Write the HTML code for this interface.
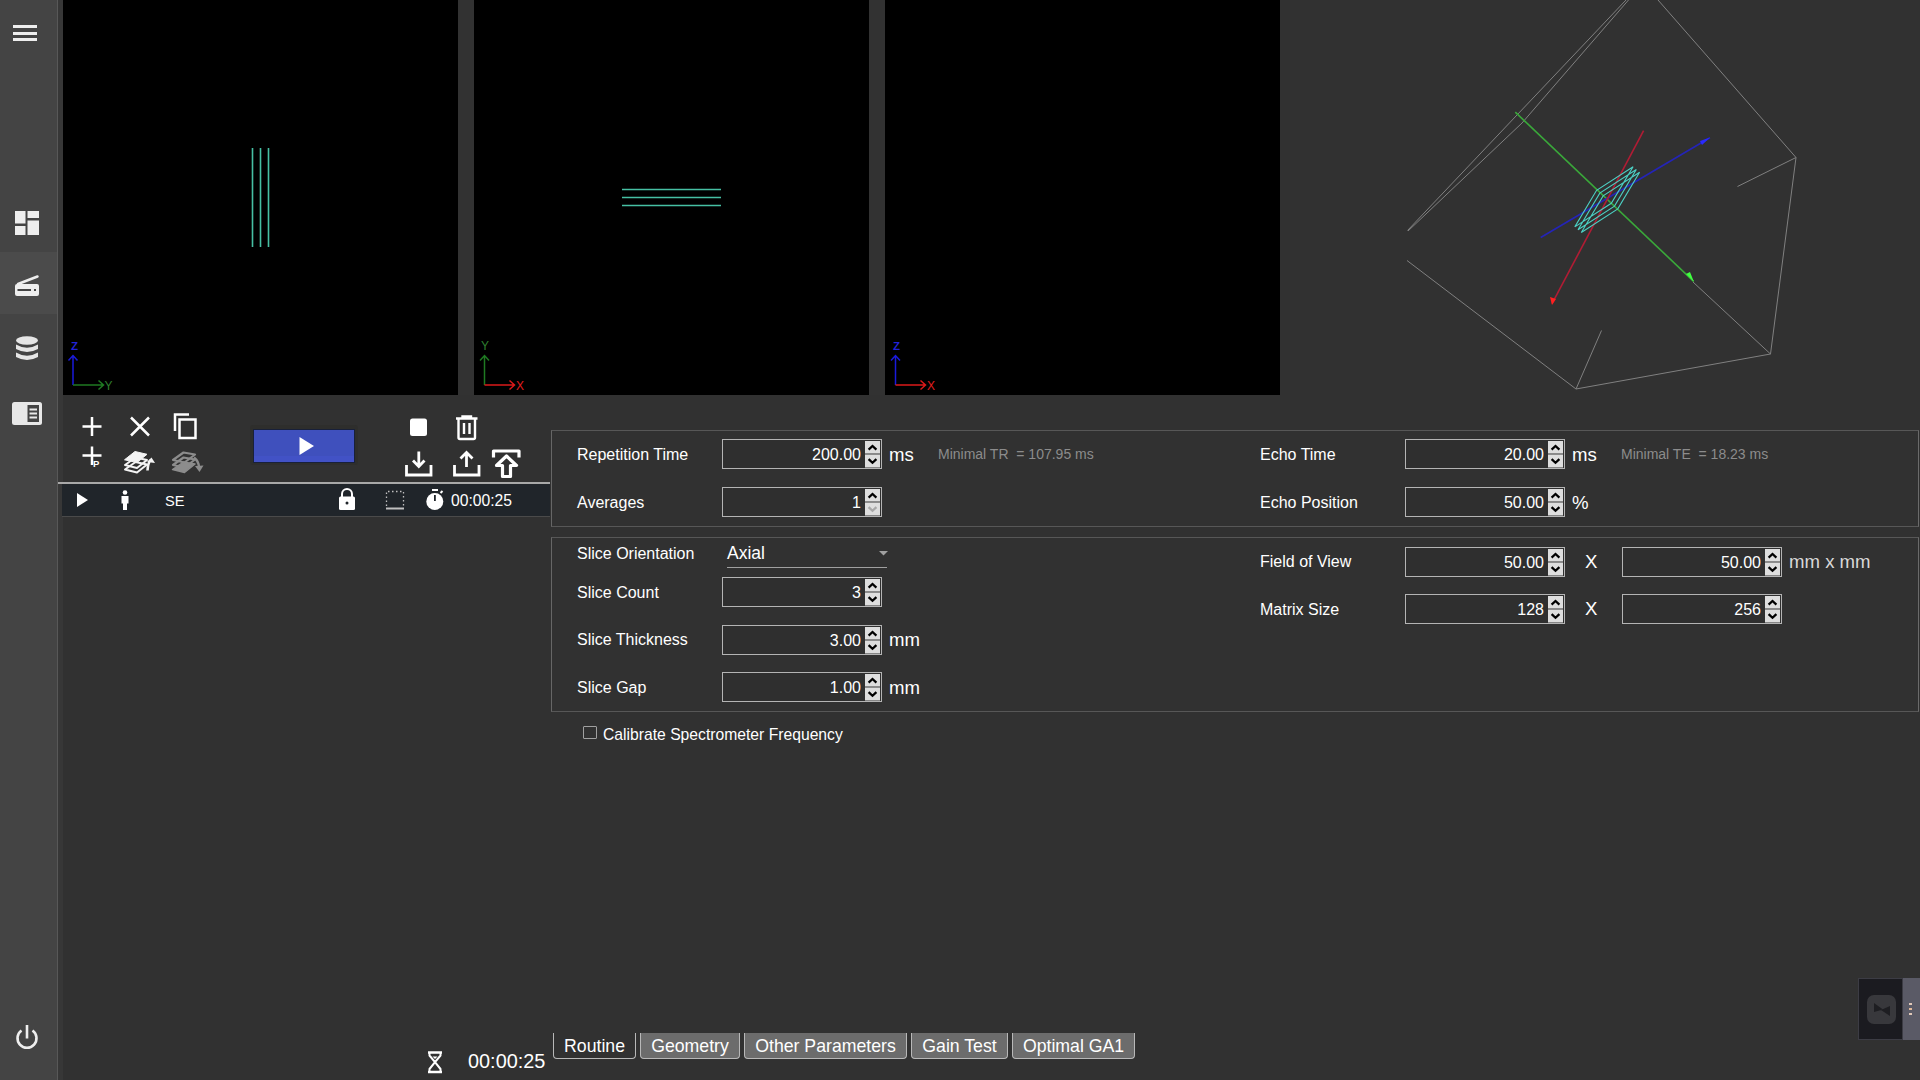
<!DOCTYPE html>
<html><head><meta charset="utf-8">
<style>
*{box-sizing:border-box}
body{margin:0;width:1920px;height:1080px;background:#313131;position:relative;overflow:hidden;font-family:"Liberation Sans",sans-serif;color:#fff}
.a{position:absolute}
.pv{position:absolute;top:0;height:395px;background:#000}
.lbl{position:absolute;font-size:16px;color:#fff;white-space:pre;line-height:18px}
.spin{position:absolute;width:160px;height:30px;border:1px solid #b4b4b4;background:#2f2f2f}
.spin .v{position:absolute;right:20px;top:6px;font-size:16px;line-height:18px;color:#fff}
.spin .bt{position:absolute;right:1px;top:1px;width:16px;height:26px;background:#d9d9d9}
.unit{position:absolute;font-size:18.6px;color:#fff;line-height:20px;white-space:pre}
.hint{position:absolute;font-size:14px;color:#8c8c8c;line-height:16px;white-space:pre}
.grp{position:absolute;border:1px solid #575757;border-left-color:#666;border-right-color:#6a6a6a}
.tab{position:absolute;top:1033px;height:26px;border:1px solid #b8b8b8;border-top:none;border-radius:0 0 4px 4px;font-size:17.7px;line-height:26px;text-align:center;color:#fff;white-space:pre}
</style></head><body>
<!-- sidebar -->
<div class="a" style="left:0;top:0;width:57px;height:1080px;background:#444"></div>
<div class="a" style="left:0;top:252px;width:57px;height:62px;background:#4b4b4b"></div>
<div class="a" style="left:57px;top:0;width:1px;height:1080px;background:#585858"></div>
<div class="a" style="left:58px;top:0;width:5px;height:1080px;background:#373737"></div>

<!-- preview panels -->
<div class="a" style="left:458px;top:0;width:16px;height:395px;background:#323232"></div>
<div class="a" style="left:869px;top:0;width:16px;height:395px;background:#323232"></div>
<div class="pv" style="left:63px;width:395px"></div>
<div class="pv" style="left:474px;width:395px"></div>
<div class="pv" style="left:885px;width:395px"></div>
<div class="a" style="left:1280px;top:0;width:640px;height:395px;background:#313131"></div>


<svg class="a" style="left:0;top:0" width="1920" height="400" viewBox="0 0 1920 400">
 <g stroke="#46bfa3" stroke-width="1.6" fill="none">
  <path d="M252.5 148V247M260.5 148V247M268.5 148V247"/>
  <path d="M622 189.5H721M622 197.5H721M622 205.5H721"/>
 </g>
 <!-- axes panel1 Z/Y -->
 <g fill="none" stroke-width="1.5">
  <path d="M73 385V356M68.5 360.5L73 355.5L77.5 360.5" stroke="#1a1adc"/>
  <path d="M73 385H103M98.5 380.5L103.5 385L98.5 389.5" stroke="#1f7a22"/>
  <path d="M484.5 385V356M480 360.5L484.5 355.5L489 360.5" stroke="#1f7a22"/>
  <path d="M484.5 385H514M509.5 380.5L514.5 385L509.5 389.5" stroke="#dc1a1a"/>
  <path d="M895.5 385V356M891 360.5L895.5 355.5L900 360.5" stroke="#1a1adc"/>
  <path d="M895.5 385H925M920.5 380.5L925.5 385L920.5 389.5" stroke="#dc1a1a"/>
 </g>
 <g font-family="Liberation Sans" font-size="12">
  <text x="71" y="350" fill="#2222d8" font-weight="bold" font-size="11.5">Z</text>
  <text x="104.5" y="390" fill="#2f7f2f">Y</text>
  <text x="481" y="350" fill="#2f7f2f">Y</text>
  <text x="516" y="390" fill="#e01e1e">X</text>
  <text x="893" y="350" fill="#2222d8" font-weight="bold" font-size="11.5">Z</text>
  <text x="927" y="390" fill="#e01e1e">X</text>
 </g>
 <!-- 3D box -->
 <g stroke="#808080" stroke-width="1" fill="none">
  <path d="M1407.5 230.5L1626 0M1408 231L1522 123L1628.5 0"/>
  <path d="M1658 0L1796 157.5L1770.5 354L1576 389L1407 260.5"/>
  <path d="M1576 389L1601.5 330.5"/>
  <path d="M1737.5 186.5L1796 157.5"/>
  <path d="M1693 282L1770.5 354"/>
 </g>
 <g fill="none" stroke-width="1.6">
  <path d="M1515.3 112.2L1693.6 281.3" stroke="#3aa83a"/>
  <path d="M1540.7 237.5L1709.9 137.7" stroke="#2424b8"/>
  <path d="M1643.6 130.6L1552 303.7" stroke="#b01c34"/>
 </g>
 <path d="M1686 274L1694 282L1690 272Z" fill="#40ff40"/>
 <path d="M1700 141L1710 137.5L1702 145Z" fill="#2a2aff"/>
 <path d="M1550 297L1552 305L1556 299Z" fill="#ff2020"/>
 <g stroke="#4cd0c4" stroke-width="1.1" fill="none">
  <path d="M1574.8 226.9L1596.6 190.3L1633.1 166.7L1611.3 203.3ZM1578.0 229.7L1599.8 193.1L1636.3 169.5L1614.5 206.1ZM1581.3 232.5L1603.1 195.9L1639.6 172.3L1617.8 208.9Z"/>
 </g>
</svg>

<!-- sidebar icons -->
<svg class="a" style="left:0;top:0" width="57" height="1080" viewBox="0 0 57 1080">
 <g fill="#eee">
  <rect x="13" y="25" width="24" height="3"/><rect x="13" y="32" width="24" height="3"/><rect x="13" y="38" width="24" height="3"/>
  <rect x="15" y="211" width="10.5" height="12.5"/><rect x="27.5" y="211" width="11.5" height="7"/>
  <rect x="15" y="226" width="10.5" height="9"/><rect x="27.5" y="220.5" width="11.5" height="14.5"/>
 </g>
 <path d="M18 284L37.5 276.5" stroke="#eee" stroke-width="2.5" stroke-linecap="round"/>
 <rect x="15" y="284" width="24" height="12" rx="2" fill="#eee"/>
 <rect x="17.5" y="289" width="13.5" height="2" fill="#444"/><rect x="34" y="289" width="2" height="2" fill="#444"/>
 <g fill="#e6e6e6">
  <ellipse cx="27" cy="340.5" rx="11" ry="4.2"/>
  <path d="M16 344.5Q27 351 38 344.5V349Q27 355 16 349Z"/>
  <path d="M16 352.5Q27 359 38 352.5V357Q27 363 16 357Z"/>
 </g>
 <rect x="12" y="402" width="30" height="23" rx="2.5" fill="#e8e8e8"/>
 <rect x="27.5" y="405" width="11.5" height="17" fill="#444"/>
 <g fill="#e8e8e8"><rect x="29.5" y="408.5" width="7.5" height="2"/><rect x="29.5" y="412.5" width="7.5" height="2"/><rect x="29.5" y="416.5" width="7.5" height="2"/></g>
 <path d="M21.5 1030.5A9.5 9.5 0 1 0 32.5 1030.5" stroke="#eee" stroke-width="2.6" fill="none"/>
 <path d="M27 1025V1038.5" stroke="#eee" stroke-width="2.6"/>
</svg>

<!-- left toolbar -->
<svg class="a" style="left:58px;top:400px" width="495" height="120" viewBox="58 400 495 120">
 <g stroke="#fff" stroke-width="2.5" fill="none">
  <path d="M92 417V436M82.5 426.5H101.5"/>
  <path d="M131 417.5L149 435.5M149 417.5L131 435.5"/>
  <path d="M175 431V414.5H189"/>
  <rect x="179.5" y="419.5" width="16" height="18.5"/>
  <path d="M92 446.5V465M82.5 455.5H101.5"/>
 </g>
 <text x="93" y="467" font-family="Liberation Sans" font-size="9.5" font-weight="bold" fill="#fff">P</text>
 <!-- layers up -->
 <g stroke="#f4f4f4" stroke-width="2" fill="none" stroke-linejoin="round">
  <path d="M125 465L135.5 457.5L147 460L137 468Z"/>
  <path d="M125 469.5L135.5 462L147 464.5L137 472.5Z"/>
 </g>
 <path d="M124.5 459.8L135 451.5L147 454.3L137 462.5Z" fill="#f4f4f4" stroke="#f4f4f4" stroke-width="1" stroke-linejoin="round"/>
 <path d="M147.5 470.5Q148 463 150.5 460" stroke="#f4f4f4" stroke-width="2.6" fill="none"/>
 <path d="M147 462L151.5 457.5L155 463Z" fill="#f4f4f4"/>
 <!-- layers down gray -->
 <g stroke="#8c8c8c" stroke-width="2.2" fill="none" stroke-linejoin="round">
  <path d="M173 460L183.5 452.5L195 454.5L184.5 462.5Z"/>
  <path d="M173 465L183.5 457.5L195 459.5L184.5 467.5Z"/>
 </g>
 <path d="M172.5 469.5L183.5 462L195 464L184.5 472.5Z" fill="#8c8c8c" stroke="#8c8c8c" stroke-width="1.5" stroke-linejoin="round"/>
 <path d="M194 457.5Q198.5 461 199 467" stroke="#8c8c8c" stroke-width="2.4" fill="none"/>
 <path d="M195 466L203.5 465.5L199.5 472Z" fill="#8c8c8c"/>
 <!-- play button -->
 <rect x="250" y="425" width="108" height="40" rx="3" fill="#2e2e2c"/>
 <rect x="253" y="429" width="102" height="34" fill="#18203a"/>
 <rect x="254" y="430" width="100" height="32" fill="#3f50bd"/>
 <rect x="254" y="456" width="100" height="6" fill="#4252c6"/>
 <path d="M299.5 437L314 446L299.5 455Z" fill="#fff"/>
 <!-- stop / trash -->
 <rect x="410" y="418.5" width="17" height="17.5" rx="2.5" fill="#fff"/>
 <g stroke="#fff" stroke-width="2.4" fill="none">
  <path d="M456 418.5H477.5M462.5 418V416.5H471V418"/>
  <path d="M458.5 419V437.5Q458.5 439 460 439H473.5Q475 439 475 437.5V419"/>
  <path d="M464 423V434M469.5 423V434"/>
 </g>
 <!-- download / upload -->
 <g stroke="#fff" stroke-width="2.8" fill="none">
  <path d="M406.5 465V475H431V465"/>
  <path d="M418.8 451.5V466M413 460.5L418.8 466.5L424.5 460.5"/>
  <path d="M454.5 465V475H479V465"/>
  <path d="M466.5 467V453M460.5 458.5L466.5 452.5L472.5 458.5"/>
 </g>
 <path d="M493.5 457.5V451H519V457.5" fill="none" stroke="#fff" stroke-width="3.2" stroke-linejoin="round"/>
 <path d="M506.5 456L516.5 465.5H510.5V476.5H502.5V465.5H496.5Z" fill="none" stroke="#fff" stroke-width="3.2" stroke-linejoin="round"/>
 <!-- separator & row -->
 <rect x="58" y="482" width="492" height="2" fill="#a8a8a8"/>
 <rect x="62" y="484" width="488" height="32" fill="#20252a"/>
 <rect x="62" y="516" width="488" height="1" fill="#4a4a4a"/>
 <path d="M77 493V507L88 500Z" fill="#fff"/>
 <circle cx="125" cy="492.5" r="2.3" fill="#fff"/>
 <path d="M121.5 496H128.5V503.5H127V510H123V503.5H121.5Z" fill="#fff"/>
 <rect x="339" y="496.5" width="16" height="13.5" rx="1.5" fill="#fff"/>
 <path d="M342 497V494A5 5 0 0 1 352 494V497" stroke="#fff" stroke-width="2" fill="none"/>
 <circle cx="347" cy="503" r="1.5" fill="#20252a"/>
 <path d="M386.5 506V491.5H403.5V506" fill="none" stroke="#bfbfbf" stroke-width="1.3" stroke-dasharray="1.5 2.5"/>
 <rect x="386" y="507.5" width="18" height="2" fill="#bfbfbf"/>
 <circle cx="434.8" cy="501.5" r="8.5" fill="#fff"/>
 <rect x="432" y="489" width="6" height="2" fill="#fff"/>
 <path d="M440.5 493L442.5 491" stroke="#fff" stroke-width="2"/>
 <rect x="434" y="495" width="1.8" height="6" fill="#20252a"/>
</svg>
<div class="lbl" style="left:165px;top:492px;font-size:14.6px">SE</div>
<div class="lbl" style="left:451px;top:492px;font-size:15.7px">00:00:25</div>

<!-- group boxes -->
<div class="grp" style="left:551px;top:430px;width:1368px;height:97px"></div>
<div class="grp" style="left:551px;top:537px;width:1368px;height:175px"></div>
<div class="lbl" style="left:577px;top:446px">Repetition Time</div>
<div class="lbl" style="left:577px;top:494px">Averages</div>
<div class="lbl" style="left:1260px;top:446px">Echo Time</div>
<div class="lbl" style="left:1260px;top:494px">Echo Position</div>
<div class="lbl" style="left:577px;top:545px">Slice Orientation</div>
<div class="lbl" style="left:577px;top:584px">Slice Count</div>
<div class="lbl" style="left:577px;top:631px">Slice Thickness</div>
<div class="lbl" style="left:577px;top:679px">Slice Gap</div>
<div class="lbl" style="left:1260px;top:553px">Field of View</div>
<div class="lbl" style="left:1260px;top:601px">Matrix Size</div>
<div class="spin" style="left:722px;top:439px"><div class="v">200.00</div>
<svg class="a" style="left:142px;top:1px" width="15" height="27"><rect x="0" y="0" width="15" height="12.5" fill="#dedede"/><rect x="0" y="12.5" width="15" height="1.5" fill="#8c8c8c"/><rect x="0" y="14" width="15" height="12.5" fill="#dedede"/><path d="M3.6 8.6L7.5 5L11.4 8.6" stroke="#000" stroke-width="2.3" fill="none"/><path d="M3.6 18.2L7.5 21.8L11.4 18.2" stroke="#000" stroke-width="2.3" fill="none"/></svg></div>
<div class="spin" style="left:722px;top:487px"><div class="v">1</div>
<svg class="a" style="left:142px;top:1px" width="15" height="27"><rect x="0" y="0" width="15" height="12.5" fill="#dedede"/><rect x="0" y="12.5" width="15" height="1.5" fill="#8c8c8c"/><rect x="0" y="14" width="15" height="12.5" fill="#dedede"/><path d="M3.6 8.6L7.5 5L11.4 8.6" stroke="#000" stroke-width="2.3" fill="none"/><path d="M3.6 18.2L7.5 21.8L11.4 18.2" stroke="#a8a8a8" stroke-width="2.3" fill="none"/></svg></div>
<div class="spin" style="left:1405px;top:439px"><div class="v">20.00</div>
<svg class="a" style="left:142px;top:1px" width="15" height="27"><rect x="0" y="0" width="15" height="12.5" fill="#dedede"/><rect x="0" y="12.5" width="15" height="1.5" fill="#8c8c8c"/><rect x="0" y="14" width="15" height="12.5" fill="#dedede"/><path d="M3.6 8.6L7.5 5L11.4 8.6" stroke="#000" stroke-width="2.3" fill="none"/><path d="M3.6 18.2L7.5 21.8L11.4 18.2" stroke="#000" stroke-width="2.3" fill="none"/></svg></div>
<div class="spin" style="left:1405px;top:487px"><div class="v">50.00</div>
<svg class="a" style="left:142px;top:1px" width="15" height="27"><rect x="0" y="0" width="15" height="12.5" fill="#dedede"/><rect x="0" y="12.5" width="15" height="1.5" fill="#8c8c8c"/><rect x="0" y="14" width="15" height="12.5" fill="#dedede"/><path d="M3.6 8.6L7.5 5L11.4 8.6" stroke="#000" stroke-width="2.3" fill="none"/><path d="M3.6 18.2L7.5 21.8L11.4 18.2" stroke="#000" stroke-width="2.3" fill="none"/></svg></div>
<div class="spin" style="left:722px;top:577px"><div class="v">3</div>
<svg class="a" style="left:142px;top:1px" width="15" height="27"><rect x="0" y="0" width="15" height="12.5" fill="#dedede"/><rect x="0" y="12.5" width="15" height="1.5" fill="#8c8c8c"/><rect x="0" y="14" width="15" height="12.5" fill="#dedede"/><path d="M3.6 8.6L7.5 5L11.4 8.6" stroke="#000" stroke-width="2.3" fill="none"/><path d="M3.6 18.2L7.5 21.8L11.4 18.2" stroke="#000" stroke-width="2.3" fill="none"/></svg></div>
<div class="spin" style="left:722px;top:625px"><div class="v">3.00</div>
<svg class="a" style="left:142px;top:1px" width="15" height="27"><rect x="0" y="0" width="15" height="12.5" fill="#dedede"/><rect x="0" y="12.5" width="15" height="1.5" fill="#8c8c8c"/><rect x="0" y="14" width="15" height="12.5" fill="#dedede"/><path d="M3.6 8.6L7.5 5L11.4 8.6" stroke="#000" stroke-width="2.3" fill="none"/><path d="M3.6 18.2L7.5 21.8L11.4 18.2" stroke="#000" stroke-width="2.3" fill="none"/></svg></div>
<div class="spin" style="left:722px;top:672px"><div class="v">1.00</div>
<svg class="a" style="left:142px;top:1px" width="15" height="27"><rect x="0" y="0" width="15" height="12.5" fill="#dedede"/><rect x="0" y="12.5" width="15" height="1.5" fill="#8c8c8c"/><rect x="0" y="14" width="15" height="12.5" fill="#dedede"/><path d="M3.6 8.6L7.5 5L11.4 8.6" stroke="#000" stroke-width="2.3" fill="none"/><path d="M3.6 18.2L7.5 21.8L11.4 18.2" stroke="#000" stroke-width="2.3" fill="none"/></svg></div>
<div class="spin" style="left:1405px;top:547px"><div class="v">50.00</div>
<svg class="a" style="left:142px;top:1px" width="15" height="27"><rect x="0" y="0" width="15" height="12.5" fill="#dedede"/><rect x="0" y="12.5" width="15" height="1.5" fill="#8c8c8c"/><rect x="0" y="14" width="15" height="12.5" fill="#dedede"/><path d="M3.6 8.6L7.5 5L11.4 8.6" stroke="#000" stroke-width="2.3" fill="none"/><path d="M3.6 18.2L7.5 21.8L11.4 18.2" stroke="#000" stroke-width="2.3" fill="none"/></svg></div>
<div class="spin" style="left:1622px;top:547px"><div class="v">50.00</div>
<svg class="a" style="left:142px;top:1px" width="15" height="27"><rect x="0" y="0" width="15" height="12.5" fill="#dedede"/><rect x="0" y="12.5" width="15" height="1.5" fill="#8c8c8c"/><rect x="0" y="14" width="15" height="12.5" fill="#dedede"/><path d="M3.6 8.6L7.5 5L11.4 8.6" stroke="#000" stroke-width="2.3" fill="none"/><path d="M3.6 18.2L7.5 21.8L11.4 18.2" stroke="#000" stroke-width="2.3" fill="none"/></svg></div>
<div class="spin" style="left:1405px;top:594px"><div class="v">128</div>
<svg class="a" style="left:142px;top:1px" width="15" height="27"><rect x="0" y="0" width="15" height="12.5" fill="#dedede"/><rect x="0" y="12.5" width="15" height="1.5" fill="#8c8c8c"/><rect x="0" y="14" width="15" height="12.5" fill="#dedede"/><path d="M3.6 8.6L7.5 5L11.4 8.6" stroke="#000" stroke-width="2.3" fill="none"/><path d="M3.6 18.2L7.5 21.8L11.4 18.2" stroke="#000" stroke-width="2.3" fill="none"/></svg></div>
<div class="spin" style="left:1622px;top:594px"><div class="v">256</div>
<svg class="a" style="left:142px;top:1px" width="15" height="27"><rect x="0" y="0" width="15" height="12.5" fill="#dedede"/><rect x="0" y="12.5" width="15" height="1.5" fill="#8c8c8c"/><rect x="0" y="14" width="15" height="12.5" fill="#dedede"/><path d="M3.6 8.6L7.5 5L11.4 8.6" stroke="#000" stroke-width="2.3" fill="none"/><path d="M3.6 18.2L7.5 21.8L11.4 18.2" stroke="#000" stroke-width="2.3" fill="none"/></svg></div>

<div class="unit" style="left:889px;top:445px">ms</div>
<div class="unit" style="left:1572px;top:445px">ms</div>
<div class="unit" style="left:1572px;top:493px">%</div>
<div class="unit" style="left:889px;top:630px">mm</div>
<div class="unit" style="left:889px;top:678px">mm</div>
<div class="unit" style="left:1789px;top:552px;color:#d8d8d8">mm x mm</div>
<div class="unit" style="left:1585px;top:552px">X</div>
<div class="unit" style="left:1585px;top:599px">X</div>
<div class="hint" style="left:938px;top:446px">Minimal TR  = 107.95 ms</div>
<div class="hint" style="left:1621px;top:446px">Minimal TE  = 18.23 ms</div>
<!-- combo -->
<div class="a" style="left:727px;top:543px;font-size:17.5px;line-height:20px;color:#fff">Axial</div>
<div class="a" style="left:727px;top:567px;width:160px;height:1px;background:#a0a0a0"></div>
<svg class="a" style="left:878px;top:550px" width="11" height="7"><path d="M1 1H10L5.5 5.5Z" fill="#a0a0a0"/></svg>
<!-- checkbox -->
<div class="a" style="left:583px;top:726px;width:14px;height:13px;border:1.6px solid #a0a0a0;border-radius:1px"></div>
<div class="lbl" style="left:603px;top:726px;font-size:15.7px">Calibrate Spectrometer Frequency</div>
<!-- bottom -->
<svg class="a" style="left:425px;top:1050px" width="20" height="26">
 <path d="M3 2.5H17M3 22H17" stroke="#fff" stroke-width="2.4"/>
 <path d="M4.5 3V5.5L10 12.2L4.5 19V22M15.5 3V5.5L10 12.2L15.5 19V22" stroke="#fff" stroke-width="2" fill="none" stroke-linejoin="round"/>
 <path d="M7.5 6.5H12.5L10 9Z" fill="#fff"/>
</svg>
<div class="a" style="left:468px;top:1050px;font-size:19.9px;line-height:22px;color:#fff">00:00:25</div>
<div class="tab" style="left:553px;width:83px;background:#313131">Routine</div>
<div class="tab" style="left:640px;width:100px;background:#6c6c6c">Geometry</div>
<div class="tab" style="left:744px;width:163px;background:#6c6c6c">Other Parameters</div>
<div class="tab" style="left:911px;width:97px;background:#6c6c6c">Gain Test</div>
<div class="tab" style="left:1012px;width:123px;background:#6c6c6c">Optimal GA1</div>
<!-- bottom right widget -->
<div class="a" style="left:1858px;top:978px;width:45px;height:62px;background:#1b1b20;border:1px solid #3c3c44"></div>
<div class="a" style="left:1903px;top:978px;width:17px;height:62px;background:#5a5a66"></div>
<div class="a" style="left:1867px;top:995px;width:29px;height:29px;border-radius:7px;background:#38383c"></div>
<svg class="a" style="left:1872px;top:1001px" width="20" height="17"><path d="M2 2L11 8.5L2 11Z M9 9L18 15L18 5Z" fill="#1e1e22"/></svg>
<div class="a" style="left:1909px;top:1003px;width:3px;height:2px;background:#e0c8b8"></div>
<div class="a" style="left:1909px;top:1008px;width:3px;height:2px;background:#e0b898"></div>
<div class="a" style="left:1909px;top:1013px;width:3px;height:2px;background:#e0c8b8"></div>
</body></html>
